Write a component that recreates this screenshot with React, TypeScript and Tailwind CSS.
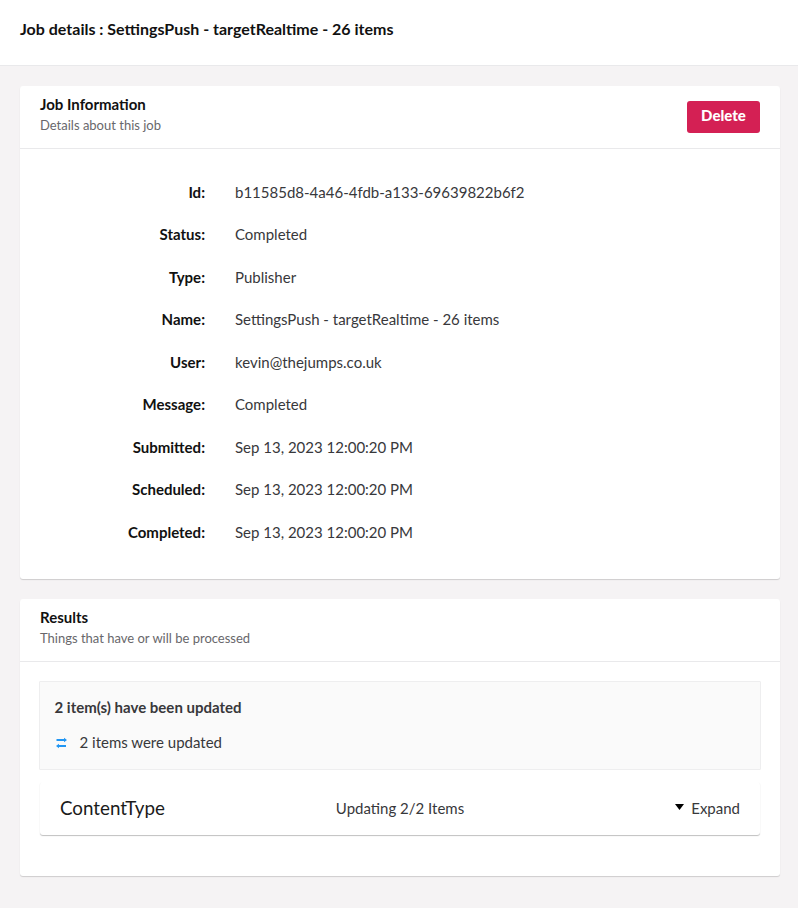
import type { ReactNode } from "react";

const details = [
  { label: "Id", value: "b11585d8-4a46-4fdb-a133-69639822b6f2" },
  { label: "Status", value: "Completed" },
  { label: "Type", value: "Publisher" },
  { label: "Name", value: "SettingsPush - targetRealtime - 26 items" },
  { label: "User", value: "kevin@thejumps.co.uk" },
  { label: "Message", value: "Completed" },
  { label: "Submitted", value: "Sep 13, 2023 12:00:20 PM" },
  { label: "Scheduled", value: "Sep 13, 2023 12:00:20 PM" },
  { label: "Completed", value: "Sep 13, 2023 12:00:20 PM" },
];

function Box({ title, description, action, children }: { title: string; description: string; action?: ReactNode; children: ReactNode }) {
  return (
    <section className="rounded-[3px] bg-white shadow-[0_1px_1px_rgba(0,0,0,0.16)]">
      <header className="flex h-[63px] items-start justify-between border-b border-[#e9e9eb] px-5 pt-2">
        <div>
          <h2 className="text-[15px] leading-[21px] font-bold text-[#111]">{title}</h2>
          <p className="text-[13px] leading-[21px] text-[#68676b]">{description}</p>
        </div>
        {action}
      </header>
      {children}
    </section>
  );
}

function UpdateIcon() {
  return (
    <svg className="mt-0.5" width="12" height="12" viewBox="0 0 12 12" fill="#2196f3">
      <path d="M1.500 2H9V.8L12 3 9 5.200V4H1.500z" />
      <path d="M11 8H4V6.800L1 9l3 2.200V10h7z" />
    </svg>
  );
}

export default function App() {
  return (
    <div className="min-h-screen bg-[#f5f3f4] font-['Lato',sans-serif] text-[15px] text-[#38383b]">
      <header className="h-[66px] border-b border-[#e9e9eb] bg-white px-5 pt-[17px]">
        <h1 className="text-base leading-6 font-bold text-[#111]">Job details : SettingsPush - targetRealtime - 26 items</h1>
      </header>

      <main className="grid gap-5 px-5 pt-5 pr-[18px]">
        <Box
          title="Job Information"
          description="Details about this job"
          action={
            <button className="mt-[7px] h-8 w-[73px] rounded-[3px] bg-[#d42054] pb-[3px] text-[15px] font-black text-white" type="button">
              Delete
            </button>
          }
        >
          <dl className="grid gap-5 pt-[31.5px] pb-[35.5px] leading-[22.5px]">
            {details.map((item) => (
              <div className="flex gap-[30px]" key={item.label}>
                <dt className="w-[185px] text-right font-bold text-[#111]">{item.label}:</dt>
                <dd>{item.value}</dd>
              </div>
            ))}
          </dl>
        </Box>

        <Box title="Results" description="Things that have or will be processed">
          <div className="px-5 pt-[19px] pb-[41px]">
            <div className="-mx-px h-[89px] rounded-[1px] border border-[#eeeeef] bg-[#fafafa] px-[14.5px] pt-[14px]">
              <h3 className="leading-[22px] font-bold">2 item(s) have been updated</h3>
              <div className="mt-[13px] flex items-center gap-[13px] leading-[22px]">
                <UpdateIcon />
                <span>2 items were updated</span>
              </div>
            </div>

            <div className="mt-3 grid h-[53px] grid-cols-3 items-center rounded-[3px] bg-white px-5 pt-px shadow-[0_1px_1px_rgba(0,0,0,0.25)]">
              <span className="text-[18.8px] text-[#1b1b1b]">ContentType</span>
              <span className="text-center">Updating 2/2 Items</span>
              <span className="flex items-center justify-end gap-[7px]">
                <svg className="mb-[3px]" width="9" height="6" viewBox="0 0 9 6" fill="#000">
                  <path d="M0 0h9L4.500 6z" />
                </svg>
                Expand
              </span>
            </div>
          </div>
        </Box>
      </main>
    </div>
  );
}
